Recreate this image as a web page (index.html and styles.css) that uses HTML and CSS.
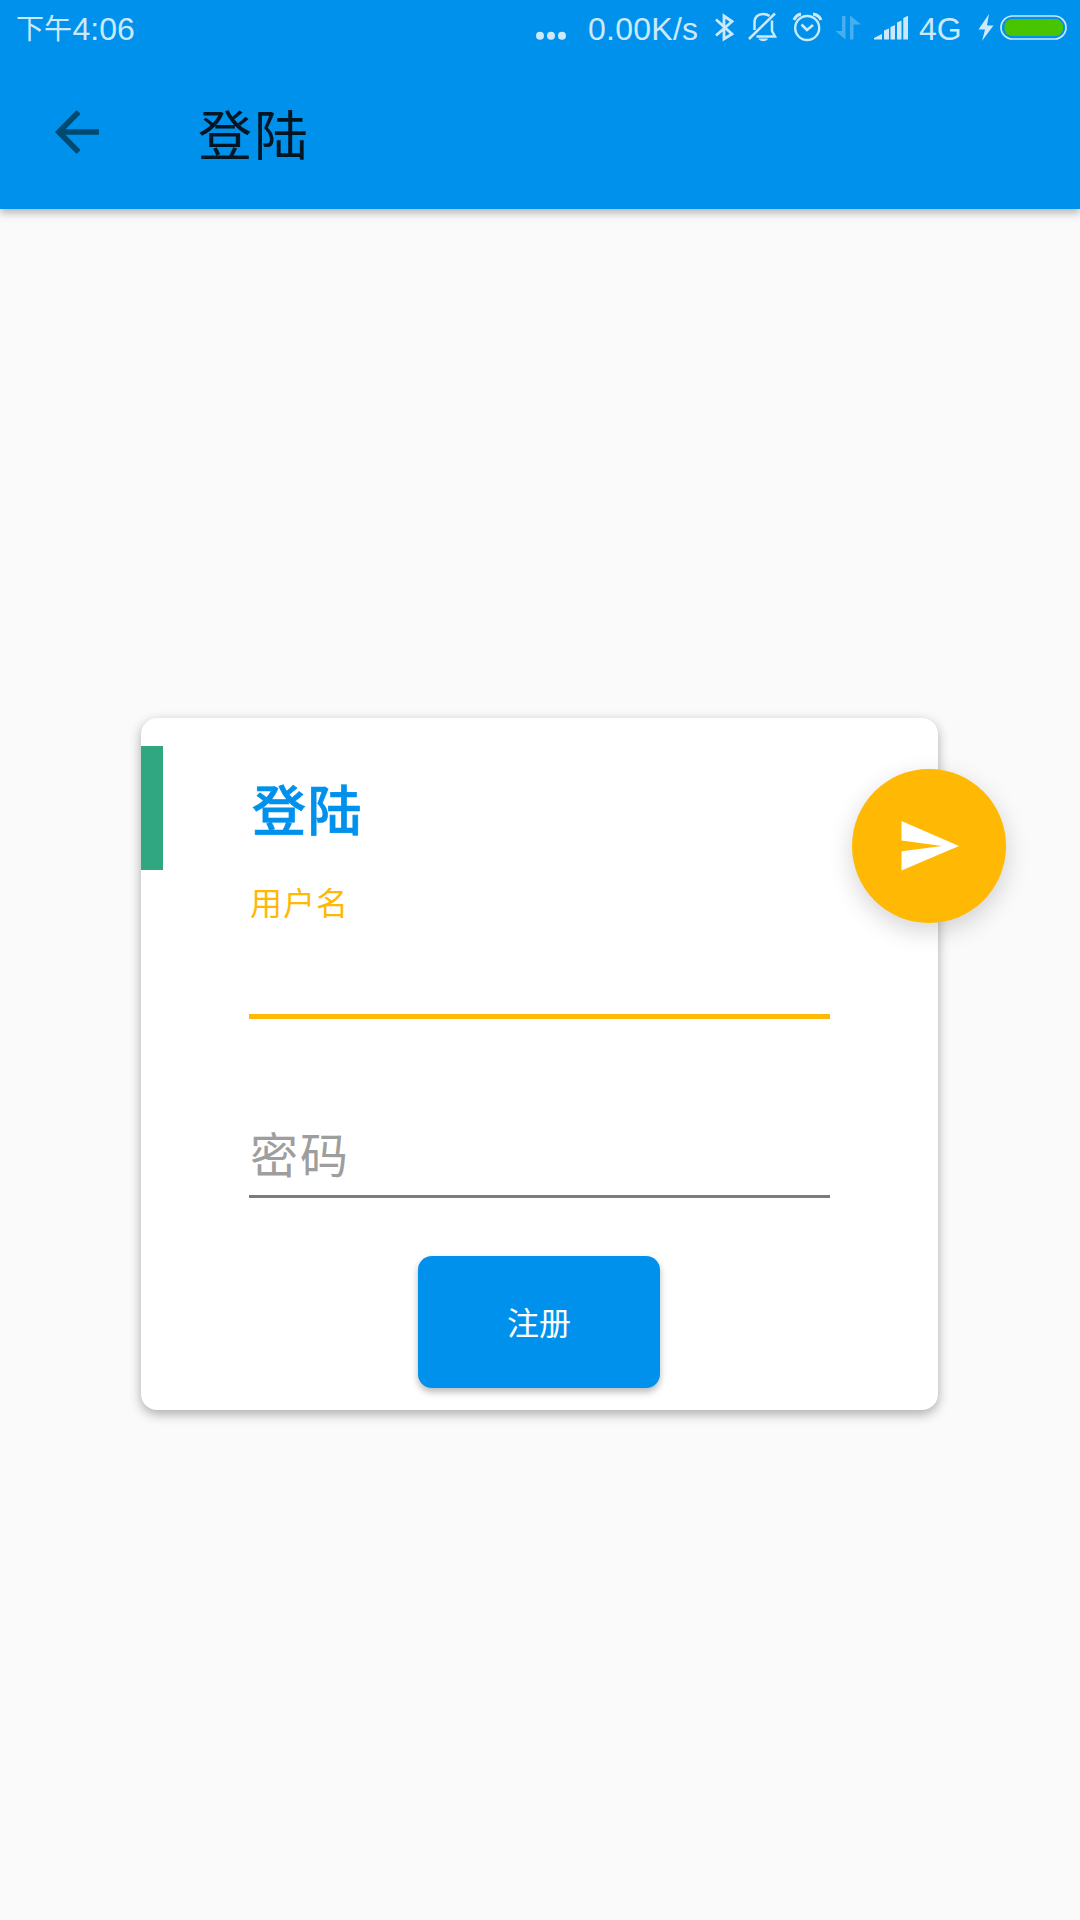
FILE: index.html
```html
<!DOCTYPE html>
<html lang="zh-CN">
<head>
<meta charset="utf-8">
<title>登陆</title>
<link rel="stylesheet" href="styles.css">
</head>
<body>
<header class="app-bar">
  <div class="status-bar">
    <div class="clock"><span class="period">下午</span>4:06</div>
    <div class="indicators">
      <svg width="58" height="56" viewBox="530 0 58 56"><g fill="currentColor"><circle cx="540" cy="35.7" r="4"/><circle cx="551" cy="35.7" r="4"/><circle cx="562" cy="35.7" r="4"/></g></svg>
      <span class="speed">0.00K/s</span>
      <svg width="36" height="56" viewBox="705 0 36 56"><path d="M716 19.500 732 34 724 39V16L732 21.500 716 35.500" fill="none" stroke="currentColor" stroke-width="2.800"/></svg>
      <svg width="42" height="56" viewBox="741 0 42 56"><g fill="none" stroke="currentColor" stroke-width="2.500"><path d="M749 39 775 13.500M754.500 30V23C754.500 17 758 14 763 14Q767 14 769.500 16M772 20.500V31L775 36.500H756.500"/></g><path d="M758.500 38.500H768C767 42 759.500 42 758.500 38.500Z" fill="currentColor"/></svg>
      <svg width="46" height="56" viewBox="783 0 46 56"><g fill="none" stroke="currentColor" stroke-width="2.400"><circle cx="807.200" cy="28" r="12"/><path d="M801.500 24.500 807 30 813 25" stroke-width="2.600"/><path d="M794 20Q796 15 801 14M813 14Q819 15 821 20" stroke-width="3"/></g></svg>
      <svg class="faint" width="39" height="56" viewBox="829 0 39 56"><path d="M842 16H845.500V39.500L835.500 31H842ZM850 15.500 861 24.500H853.500V39.500H850Z" fill="currentColor"/></svg>
      <svg width="47" height="56" viewBox="868 0 47 56"><path d="M874 39.500V38L882 34V39.500ZM884 30.500 889 28.500V39.500H884ZM890.500 27 895 25V39.500H890.500ZM897 22.500 901.500 20.500V39.500H897ZM903.300 18 908 15.800V39.500H903.300Z" fill="currentColor"/></svg>
      <span class="network">4G</span>
      <svg width="28" height="56" viewBox="970 0 28 56"><path d="M989 14 978.500 29.500H985L982 41 993.500 25.500H987Z" fill="currentColor"/></svg>
      <svg width="82" height="56" viewBox="998 0 82 56"><rect x="1001" y="16" width="65" height="23" rx="11.500" fill="none" stroke="currentColor" stroke-width="1.700"/><rect x="1004.500" y="19" width="58.500" height="17" rx="7.500" fill="#48c400"/></svg>
    </div>
  </div>
  <div class="toolbar">
    <svg class="back" width="44" height="44" viewBox="0 0 44 44"><path d="M44 19.200H10.500L25.500 4 21.700 0 0 22 21.700 44 25.500 40 10.500 24.800H44Z" fill="currentColor"/></svg>
    <h1 class="page-title">登陆</h1>
  </div>
</header>
<main class="content">
  <form class="card">
    <span class="accent"></span>
    <h2 class="card-title">登陆</h2>
    <div class="field active"><label>用户名</label></div>
    <div class="field"><label>密码</label></div>
    <button class="register" type="button">注册</button>
    <button class="fab" type="button" aria-label="登陆"><svg width="58" height="50" viewBox="0 0 58 50"><path d="M.5 0 58 25 .5 49.500V30.300L41 25 .5 19.600Z" fill="#fff"/></svg></button>
  </form>
</main>
</body>
</html>
```
FILE: styles.css
```css
* { box-sizing: border-box; }

body {
  margin: 0;
  height: 1920px;
  display: flex;
  flex-direction: column;
  background: #fafafa;
  font-family: "Noto Sans CJK SC", sans-serif;
}

svg { display: block; flex: none; }

.app-bar {
  height: 209px;
  background: #0091ec;
  box-shadow: 0 4px 8px rgba(0, 0, 0, .28);
}

.status-bar {
  height: 56px;
  padding-left: 16px;
  display: flex;
  justify-content: space-between;
  color: #cce9fb;
  font: 32px/58px "Liberation Sans", "Noto Sans CJK SC", sans-serif;
}

.clock { display: flex; white-space: nowrap; }

.period {
  width: 56.5px;
  font-family: "Noto Sans CJK SC", sans-serif;
  font-size: 28px;
  line-height: 54px;
  font-weight: 400;
}

.indicators { display: flex; }
.speed { width: 117px; letter-spacing: .25px; }
.network { width: 55px; padding-left: 4px; }
.faint { opacity: .35; }

.toolbar {
  height: 153px;
  padding-left: 55px;
  display: flex;
  align-items: flex-start;
}

.back { margin-top: 54px; color: #00496f; }

.page-title {
  margin: 37px 0 0 99px;
  font-size: 54px;
  line-height: 80px;
  letter-spacing: 2px;
  font-weight: 400;
  color: #001624;
}

.content {
  flex: 1;
  display: flex;
  justify-content: center;
  align-items: flex-start;
  padding: 509px 1px 0 0;
}

.card {
  position: relative;
  width: 797px;
  height: 692px;
  padding: 50px 108px 0;
  display: flex;
  flex-direction: column;
  align-items: stretch;
  background: #fff;
  border-radius: 16px;
  box-shadow: 0 4px 12px rgba(0, 0, 0, .32);
}

.accent {
  position: absolute;
  left: 0;
  top: 28px;
  width: 22px;
  height: 124px;
  background: #30a781;
}

.card-title {
  margin: 0 0 0 3px;
  height: 82px;
  font-size: 54px;
  line-height: 80px;
  letter-spacing: 1.5px;
  font-weight: 500;
  -webkit-text-stroke: .7px currentColor;
  color: #0091ec;
}

.field {
  height: 179px;
  padding: 98px 0 0 1px;
  border-bottom: 3px solid #7b7b7b;
  font-size: 48px;
  line-height: 70px;
  letter-spacing: 2px;
  color: #9e9e9e;
}

.field.active {
  height: 169px;
  padding-top: 27px;
  border-bottom: 5px solid #ffb803;
  font-size: 32px;
  line-height: 48px;
  letter-spacing: 1px;
  color: #ffb803;
}

.field label { display: block; font-weight: 400; }

.register {
  align-self: center;
  width: 242px;
  height: 132px;
  margin: 58px 1px 0 0;
  padding: 0 0 2px;
  border: 0;
  border-radius: 14px;
  background: #0091ec;
  box-shadow: 0 4px 7px rgba(0, 0, 0, .28);
  color: #fff;
  font: 400 32px/48px "Noto Sans CJK SC", sans-serif;
}

.fab {
  position: absolute;
  left: 711px;
  top: 51px;
  width: 154px;
  height: 154px;
  padding: 0 0 0 1px;
  border: 0;
  border-radius: 50%;
  display: flex;
  align-items: center;
  justify-content: center;
  background: #ffb803;
  box-shadow: 0 8px 24px rgba(0, 0, 0, .17);
}
```
